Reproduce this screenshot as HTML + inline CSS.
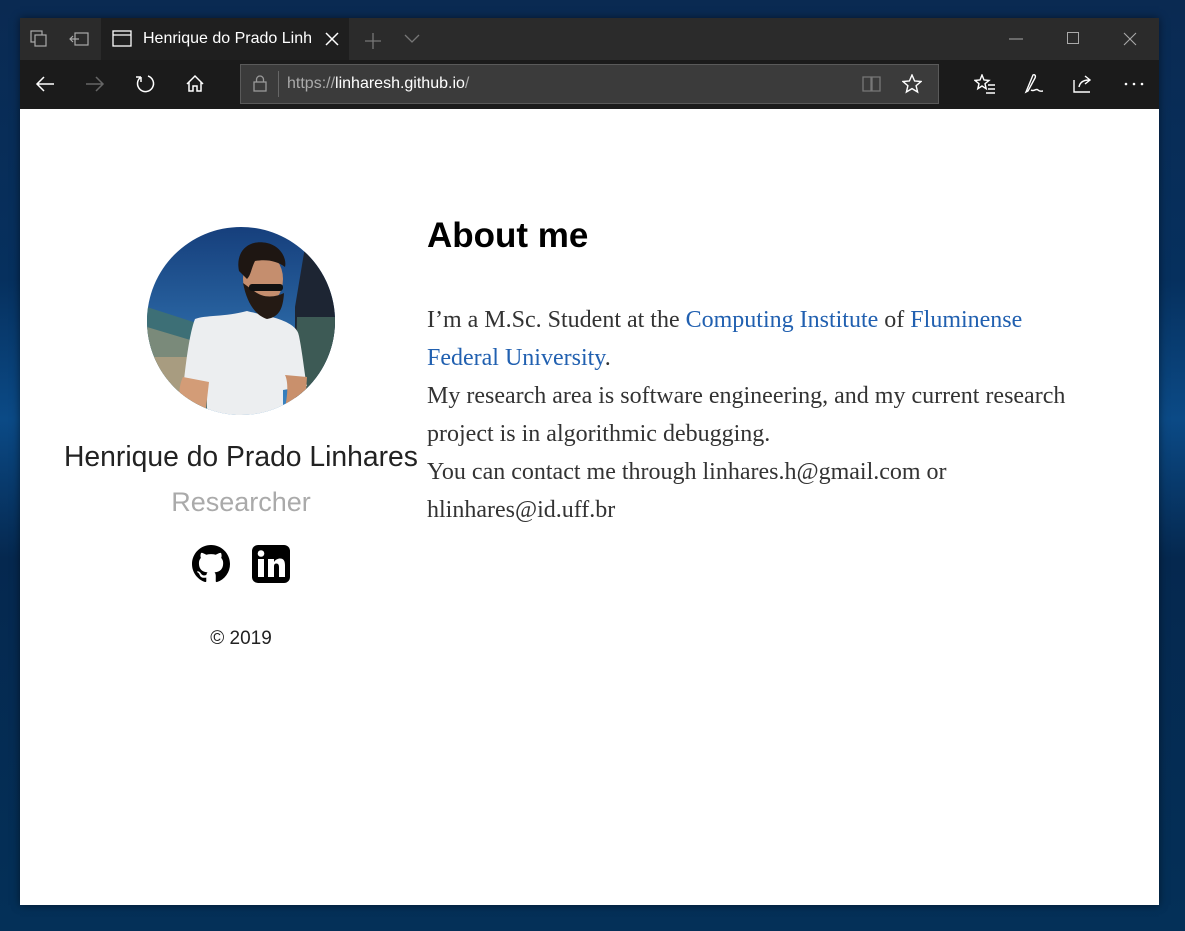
<!DOCTYPE html>
<html><head><meta charset="utf-8"><style>
*{margin:0;padding:0;box-sizing:border-box}
html,body{width:1185px;height:931px;overflow:hidden}
body{background:linear-gradient(180deg,#0a2a52 0%,#06305e 30%,#0b4a86 45%,#05284f 60%,#043058 100%);position:relative;font-family:"Liberation Sans",sans-serif}
.win{position:absolute;left:20px;top:18px;width:1139px;height:887px;background:#fff;box-shadow:0 0 8px rgba(0,0,0,.5)}
.title{position:absolute;left:0;top:0;width:1139px;height:42px;background:#2b2b2b}
.tab{position:absolute;left:81px;top:0;width:248px;height:42px;background:#1f1f1f;color:#fff;font-size:15px}
.tool{position:absolute;left:0;top:42px;width:1139px;height:49px;background:#1b1b1b}
.addr{position:absolute;left:220px;top:4px;width:699px;height:40px;background:#3b3b3b;border:1px solid #5a5a5a}
.page{position:absolute;left:0;top:91px;width:1139px;height:796px;background:#fff}
.t{position:absolute;white-space:nowrap}
svg{position:absolute}
.body{font-family:"Liberation Serif",serif;font-size:24px;color:#333;line-height:38px;letter-spacing:0px}
a{color:#2160b0;text-decoration:none}
</style></head><body>
<div class="win">
 <div class="title">
  <svg style="left:10px;top:12px" width="18" height="18" fill="none" stroke="#aaa" stroke-width="1.2"><rect x="1" y="1" width="11" height="11"/><rect x="5" y="5" width="11" height="11" fill="#2b2b2b"/></svg>
  <svg style="left:49px;top:13px" width="20" height="16" fill="none" stroke="#aaa" stroke-width="1.2"><rect x="6" y="2" width="13" height="12"/><path d="M1 8h9M4 5l-3 3 3 3"/></svg>
  <div class="tab">
   <svg style="left:11px;top:12px" width="20" height="18" fill="none" stroke="#fff" stroke-width="1.3"><rect x="1" y="1" width="18" height="15"/><path d="M1 5h18"/></svg>
   <div class="t" style="left:42px;top:12px;font-size:16px">Henrique do Prado Linh</div>
   <svg style="left:224px;top:14px" width="14" height="14" stroke="#fff" stroke-width="1.5"><path d="M1 1l12 12M13 1L1 13"/></svg>
  </div>
  <svg style="left:344px;top:14px" width="18" height="18" stroke="#777" stroke-width="1.3"><path d="M9 1v16M1 9h16"/></svg>
  <svg style="left:384px;top:16px" width="16" height="10" fill="none" stroke="#777" stroke-width="1.3"><path d="M1 1l7 7 7-7"/></svg>
  <svg style="left:989px;top:20px" width="14" height="2" stroke="#aaa"><path d="M0 1h14"/></svg>
  <svg style="left:1047px;top:14px" width="13" height="13" fill="none" stroke="#aaa"><rect x=".5" y=".5" width="11" height="11"/></svg>
  <svg style="left:1103px;top:14px" width="14" height="14" stroke="#aaa" stroke-width="1.1"><path d="M1 1l12 12M13 1L1 13"/></svg>
 </div>
 <div class="tool">
  <svg style="left:15px;top:15px" width="20" height="18" fill="none" stroke="#fff" stroke-width="1.5"><path d="M19 9H2M9 2L2 9l7 7"/></svg>
  <svg style="left:65px;top:15px" width="20" height="18" fill="none" stroke="#666" stroke-width="1.5"><path d="M1 9h17M11 2l7 7-7 7"/></svg>
  <svg style="left:115px;top:13px" width="22" height="22" fill="none" stroke="#fff" stroke-width="1.5"><path d="M6 4A8 8 0 1 0 13 3M6 4V9M6 4H1"/></svg>
  <svg style="left:165px;top:14px" width="20" height="20" fill="none" stroke="#fff" stroke-width="1.5"><path d="M2 10L10 2l8 8M4 8v9h4v-5h4v5h4V8"/></svg>
  <div class="addr">
   <svg style="left:12px;top:10px" width="14" height="18" fill="none" stroke="#999" stroke-width="1.3"><rect x="1" y="7" width="12" height="9"/><path d="M3.5 7V4.5a3.5 3.5 0 0 1 7 0V7"/></svg>
   <div style="position:absolute;left:37px;top:6px;width:1px;height:26px;background:#666"></div>
   <div class="t" style="left:46px;top:10px;font-size:16px;color:#aaa">https://<span style="color:#fff">linharesh.github.io</span>/</div>
   <svg style="left:621px;top:10px" width="20" height="18" fill="none" stroke="#777" stroke-width="1.3"><path d="M1 2h8v14H1zM10 2h8v14h-8z"/></svg>
   <svg style="left:661px;top:9px" width="20" height="20" fill="none" stroke="#fff" stroke-width="1.4"><path d="M10 1l2.6 6 6.4.5-4.9 4.2 1.5 6.3L10 14.6 4.4 18l1.5-6.3L1 7.5 7.4 7z"/></svg>
  </div>
  <svg style="left:954px;top:14px" width="22" height="20" fill="none" stroke="#fff" stroke-width="1.4"><path d="M8 1l2 5 5 .4-4 3.3 1.2 5L8 12 3.8 14.7 5 9.7 1 6.4 6 6z"/><path d="M14 11h7M14 15h7M12 19h9"/></svg>
  <svg style="left:1003px;top:13px" width="22" height="22" fill="none" stroke="#fff" stroke-width="1.4"><path d="M3 19L10 2c2-1 3 1 2 3L5 18zM8 17c3 2 5-2 7 0s3 1 5 1"/></svg>
  <svg style="left:1052px;top:14px" width="22" height="20" fill="none" stroke="#fff" stroke-width="1.4"><path d="M2 6v12h16M7 13c1-5 5-7 10-7M13 2l5 4-5 4"/></svg>
  <svg style="left:1104px;top:22px" width="20" height="4" fill="#fff"><circle cx="2" cy="2" r="1.3"/><circle cx="10" cy="2" r="1.3"/><circle cx="18" cy="2" r="1.3"/></svg>
 </div>
 <div class="page">
  <svg style="left:127px;top:118px" width="188" height="188" viewBox="0 0 188 188">
   <defs><clipPath id="c"><circle cx="94" cy="94" r="94"/></clipPath>
   <linearGradient id="sky" x1="0" y1="0" x2="0" y2="1"><stop offset="0" stop-color="#163f7c"/><stop offset="1" stop-color="#3a86c4"/></linearGradient></defs>
   <g clip-path="url(#c)">
    <rect width="188" height="188" fill="url(#sky)"/>
    <path d="M0 80l62 20v90H0z" fill="#3d6f76"/>
    <path d="M0 100l50 15v73H0z" fill="#7a8a7a"/>
    <path d="M0 130h40v58H0z" fill="#a89c80"/>
    <path d="M158 20l30-10v178h-40V80z" fill="#1d2533"/>
    <path d="M150 90h38v80h-40z" fill="#3d5a55"/>
    <path d="M48 92c10-4 30-2 52-8 14 4 50 8 52 25 4 20 6 42 8 50l-24 4v30H60v-30l-24 0c2-20 6-56 12-71z" fill="#eceef0"/>
    <path d="M36 150c-6 12-4 30 0 40h22l4-35z" fill="#d39c77"/>
    <path d="M138 148c4 8 2 24 0 32h20l2-30z" fill="#c9906c"/>
    <ellipse cx="116" cy="52" rx="20" ry="26" fill="#c58e6e"/>
    <path d="M92 44c-4-20 10-32 28-28 14 3 20 16 18 24-8-6-18-8-30-6-4 8-4 14-8 18z" fill="#1e1612"/>
    <path d="M96 56c4 20 12 32 24 36 12-2 16-10 17-26-8 4-20 6-30-2z" fill="#241a14"/>
    <rect x="102" y="57" width="34" height="7" rx="3" fill="#111"/>
   </g>
  </svg>
  <div class="t" style="left:44px;top:331px;font-size:28.3px;color:#222">Henrique do Prado Linhares</div>
  <div class="t" style="left:0;width:442px;text-align:center;top:378px;font-size:27px;color:#aaa">Researcher</div>
  <svg style="left:172px;top:436px" width="38" height="38" viewBox="0 0 16 16"><path fill="#000" d="M8 0C3.580 0 0 3.58 0 8c0 3.54 2.29 6.53 5.47 7.59.4.07.55-.17.55-.38 0-.19-.01-.82-.01-1.49-2.01.37-2.53-.49-2.690-.94-.09-.23-.48-.94-.82-1.13-.28-.15-.68-.52-.01-.53.63-.01 1.08.58 1.23.82.72 1.21 1.87.87 2.33.66.07-.52.28-.87.51-1.070-1.78-.2-3.64-.89-3.64-3.95 0-.87.31-1.59.82-2.15-.08-.2-.36-1.02.08-2.12 0 0 .67-.21 2.2.82.64-.18 1.32-.27 2-.27.68 0 1.36.09 2 .27 1.53-1.04 2.2-.82 2.2-.82.44 1.1.16 1.92.08 2.12.51.56.82 1.27.82 2.15 0 3.07-1.87 3.75-3.65 3.95.29.25.54.73.54 1.48 0 1.07-.01 1.93-.01 2.2 0 .21.15.46.55.38A8.013 8.013 0 0016 8c0-4.42-3.58-8-8-8z"/></svg>
  <svg style="left:232px;top:436px" width="38" height="38" viewBox="0 0 38 38"><rect width="38" height="38" rx="6" fill="#000"/><rect x="6" y="14" width="6" height="18" fill="#fff"/><circle cx="9" cy="8.5" r="3.3" fill="#fff"/><path d="M16 14h6v3c1.5-2.5 4-3.5 6-3.5 4 0 5 3 5 7V32h-6v-10c0-2-.7-3.5-2.7-3.5S22 20 22 22v10h-6z" fill="#fff"/></svg>
  <div class="t" style="left:0;width:442px;text-align:center;top:519px;font-size:19px;color:#222">© 2019</div>
  <div class="t" style="left:407px;top:107px;font-size:35px;font-weight:bold;color:#000">About me</div>
  <div class="t body" style="left:407px;top:192px">I’m a M.Sc. Student at the <a>Computing Institute</a> of <a>Fluminense</a><br><a>Federal University</a>.<br>My research area is software engineering, and my current research<br>project is in algorithmic debugging.<br>You can contact me through linhares.h@gmail.com or<br>hlinhares@id.uff.br</div>
 </div>
</div>
</body></html>
